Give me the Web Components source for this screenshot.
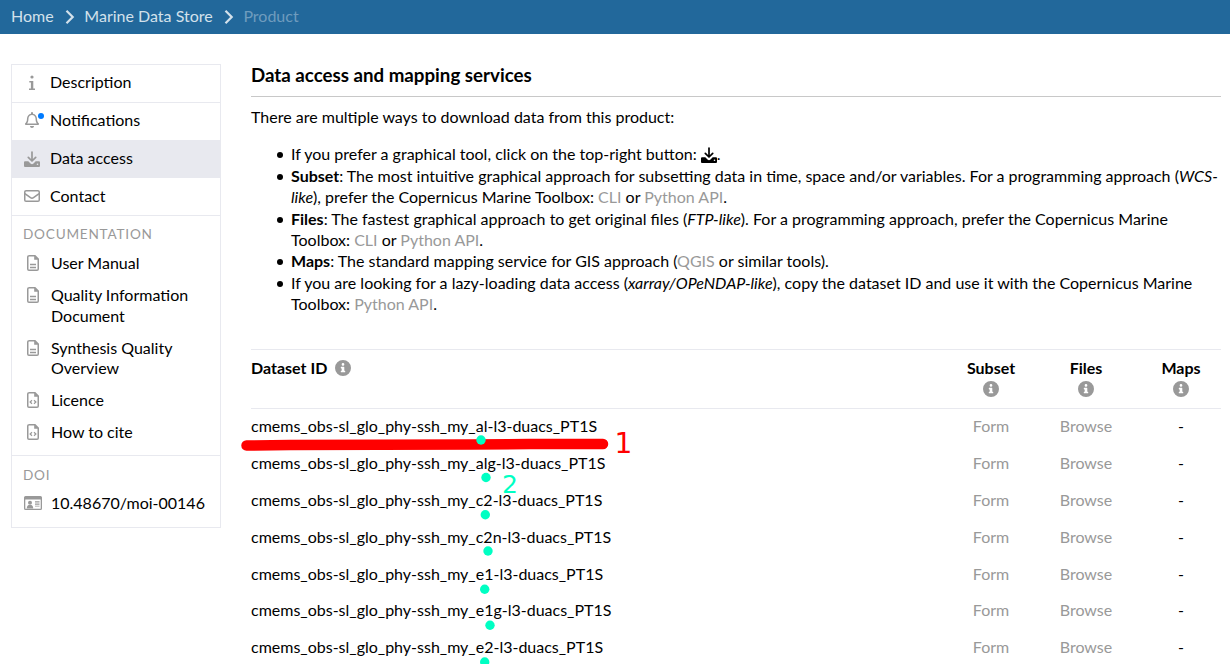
<!DOCTYPE html>
<html lang="en">
<head>
<meta charset="utf-8">
<title>Marine Data Store - Product</title>
<style>
body{margin:0;background:#fff;color:#000;font:16px/20.57px Lato,Carlito,sans-serif;overflow:hidden}
</style>
</head>
<body>
<product-page></product-page>
<script>
const ICONS = {
  info: ['0 0 16 16', '<circle cx="8" cy="2" r="1.600"/><path d="M5.300 6h4v7.500h1.700V15H5v-1.500h1.900v-6H5.300z"/>'],
  bell: ['0 0 448 512', '<path d="M439.400 362.300c-19.300-20.800-55.500-52-55.500-154.300 0-77.700-54.500-139.900-127.900-155.200V32a32 32 0 1 0-64 0v20.800C118.600 68.100 64.100 130.300 64.100 208c0 102.300-36.200 133.500-55.500 154.300C2.600 368.700 0 376.400 0 384c.1 16.400 13 32 32.100 32h383.800c19.100 0 32-15.600 32.100-32 0-7.600-2.600-15.300-8.600-21.700zM67.500 368c21.200-28 44.400-74.300 44.500-159.400 0-.2-.1-.4-.1-.6 0-61.900 50.200-112 112.100-112s112.100 50.100 112.100 112c0 .2-.1.400-.1.600.1 85.100 23.300 131.500 44.500 159.400H67.500zM224 512c35.300 0 64-28.700 64-64H160c0 35.300 28.600 64 64 64z"/>'],
  download: ['0 0 16 16', '<path d="M8 1v8.500M4.300 6.300 8 10l3.700-3.700" fill="none" stroke="currentColor" stroke-width="1.700" stroke-linecap="round" stroke-linejoin="round"/><path fill-rule="evenodd" d="M1.300 10.300h3L6.500 12.400a2.100 2.100 0 0 0 3 0l2.200-2.100h3c.8 0 1.300.5 1.300 1.300v3.100c0 .8-.5 1.300-1.300 1.300H1.300C.5 16 0 15.500 0 14.700v-3.100c0-.8.500-1.300 1.300-1.300zM13.500 12.400a.8.8 0 1 0 0 1.600.8.8 0 0 0 0-1.600z"/>'],
  mail: ['0 0 16 16', '<g fill="none" stroke="currentColor" stroke-width="1.500"><rect x=".75" y="2.750" width="14.500" height="10.500" rx="1.300"/><path d="m.9 5.600 5.600 4.100c1 .7 2 .7 3 0l5.600-4.100"/></g>'],
  file: ['0 0 12 16', '<path d="M1.500.75H8L11.250 4v10c0 .8-.5 1.250-1.250 1.250H2c-.8 0-1.250-.5-1.250-1.250V2C.75 1.200 1.200.75 2 .75zM3 9.500h6M3 12.500h6" fill="none" stroke="currentColor" stroke-width="1.500"/><path d="M7.200.5v4.300h4.300z"/>'],
  code: ['0 0 12 16', '<path d="M1.500.75H8L11.250 4v10c0 .8-.5 1.250-1.250 1.250H2c-.8 0-1.250-.5-1.250-1.250V2C.75 1.200 1.200.75 2 .75z" fill="none" stroke="currentColor" stroke-width="1.500"/><path d="M5 8.200 3.100 10 5 11.800M7 8.200 8.900 10 7 11.800" fill="none" stroke="currentColor" stroke-width="1.200"/><path d="M7.200.5v4.300h4.300z"/>'],
  card: ['0 0 18 14', '<path fill-rule="evenodd" d="M1.500 0h15Q18 0 18 1.500v11q0 1.500-1.500 1.500h-15Q0 14 0 12.500v-11Q0 0 1.500 0zM1.300 3.500v9.200h15.400V3.500z"/><circle cx="6" cy="6.700" r="2"/><path d="M2.800 12.500c0-2.200 1-3.400 2-3.400h2.400c1 0 2 1.200 2 3.400zM11 5.300h4.500v1.200H11zM11 7.500h4.500v1.200H11zM11 9.700h4.500v.7H11z"/>'],
  circle: ['0 0 16 16', '<path fill-rule="evenodd" d="M8 0a8 8 0 1 0 0 16A8 8 0 0 0 8 0zM8 3.100a1.350 1.350 0 1 1 0 2.700 1.350 1.350 0 0 1 0-2.700zM6.200 6.800h2.700q.4 0 .4.400v3.500h.5q.4 0 .4.400v.8q0 .4-.4.400H6.200q-.4 0-.4-.4v-.8q0-.4.400-.4h.5V8.400h-.5q-.4 0-.4-.4v-.8q0-.4.400-.4z"/>'],
  chevron: ['0 0 10 16', '<path d="m1.500 1.800 6.200 6.200-6.200 6.200" fill="none" stroke="currentColor" stroke-width="2.200"/>']
};
function define(name, render) {
  customElements.define(name, class extends HTMLElement {
    connectedCallback() {
      if (this.shadowRoot) return;
      this.attachShadow({mode: 'open'}).innerHTML = render(this);
    }
  });
}
define('ui-icon', el => {
  const [box, art] = ICONS[el.getAttribute('name')];
  return `<style>:host{display:inline-flex;flex:none;width:16px;height:16px}svg{width:100%;height:100%;fill:currentColor}</style><svg viewBox="${box}">${art}</svg>`;
});
define('crumb-bar', () => `<style>
:host{display:flex;align-items:center;height:34px;box-sizing:border-box;padding:0 11px 1px;background:#22689b;color:#d3e1eb}
ui-icon{width:10px;height:16px;margin:1px 10px 0 11px}
ui-icon+span{margin-left:-.3px}
.now{color:#6f9cbe}
</style><span>Home</span><ui-icon name="chevron"></ui-icon><span>Marine Data Store</span><ui-icon name="chevron"></ui-icon><span class="now">Product</span>`);
define('nav-item', el => `<style>
:host{display:flex;align-items:center;box-sizing:border-box;padding:0 0 2px 12px;border-bottom:1px solid #e8e9ef;height:38px}
:host([active]){background:#e8e9ef;height:37px;padding-bottom:1px}
:host(.last){padding-bottom:1px}
.i{position:relative;display:flex;width:16px;justify-content:center;margin-right:10px;color:#999}
.dot{position:absolute;left:14px;top:0;width:6px;height:6px;border-radius:50%;background:#007bff}
:host([unread]) ui-icon{margin-top:-1px;margin-bottom:1px}
</style><span class="i"><ui-icon name="${el.getAttribute('icon')}"></ui-icon>${el.hasAttribute('unread') ? '<span class="dot"></span>' : ''}</span><slot></slot>`);
define('doc-item', el => `<style>
:host{display:flex;align-items:flex-start;margin-bottom:11.430px;padding-left:11px}
ui-icon{width:20px;height:16px;margin:2px 8px 0 0;color:#999}
ui-icon[name=card]{width:18px;height:14px;margin:3px 9px 0 1px}
</style><ui-icon name="${el.getAttribute('icon')}"></ui-icon><span><slot></slot></span>`);
define('side-nav', () => `<style>
:host{display:block;width:208px;height:462px;border:1px solid #e8e9ef}
h2{font-size:13.600px;font-weight:400;letter-spacing:.780px;color:#999;margin:0;padding-left:11px;line-height:20px}
.docs{height:231px;padding-top:8px;border-bottom:1px solid #e8e9ef}
.docs h2{margin-bottom:9px}
.doi{padding-top:9px}
.doi h2{margin-bottom:8px}
</style>
<nav-item icon="info">Description</nav-item><nav-item icon="bell" unread>Notifications</nav-item><nav-item icon="download" active>Data access</nav-item><nav-item icon="mail" class="last">Contact</nav-item>
<div class="docs"><h2>DOCUMENTATION</h2><doc-item icon="file">User Manual</doc-item><doc-item icon="file">Quality Information<br>Document</doc-item><doc-item icon="file">Synthesis Quality<br>Overview</doc-item><doc-item icon="code">Licence</doc-item><doc-item icon="code">How to cite</doc-item></div>
<div class="doi"><h2>DOI</h2><doc-item icon="card">10.48670/moi-00146</doc-item></div>`);
define('access-guide', () => `<style>
:host{display:block}
h1{font-size:18.720px;line-height:23px;margin:0;padding-bottom:9px;border-bottom:1px solid #c8c8c8}
p{margin:10.300px 0 15.250px}
ul{margin:0;padding-left:40px;list-style:none;line-height:21px}
li{margin-bottom:.750px}
li::before{content:"";display:inline-block;width:6px;height:6px;border-radius:50%;background:#000;margin:0 8px 0 -14px;vertical-align:2px}
a{color:#999}
ui-icon{vertical-align:-3px}
</style><h1>Data access and mapping services</h1>
<p>There are multiple ways to download data from this product:</p>
<ul><li>If you prefer a graphical tool, click on the top-right button: <ui-icon name="download"></ui-icon>.</li>
<li><b>Subset</b>: The most intuitive graphical approach for subsetting data in time, space and/or variables. For a programming approach (<i>WCS-<br>like</i>), prefer the Copernicus Marine Toolbox: <a>CLI</a> or <a>Python API</a>.</li>
<li><b>Files</b>: The fastest graphical approach to get original files (<i>FTP-like</i>). For a programming approach, prefer the Copernicus Marine<br>Toolbox: <a>CLI</a> or <a>Python API</a>.</li>
<li><b>Maps</b>: The standard mapping service for GIS approach (<a>QGIS</a> or similar tools).</li>
<li>If you are looking for a lazy-loading data access (<i>xarray/OPeNDAP-like</i>), copy the dataset ID and use it with the Copernicus Marine<br>Toolbox: <a>Python API</a>.</li></ul>`);
define('dataset-row', () => `<style>
:host{display:grid;grid-template-columns:1fr 95px 95px 95px;height:36.800px;align-items:center;text-align:center;margin-right:-7.500px}
.id{text-align:left}a{color:#999}
</style><span class="id"><slot></slot></span><a>Form</a><a>Browse</a><span>-</span>`);
define('dataset-table', () => `<style>
:host{display:block;border-top:1px solid #e8e9ef}
.head{display:grid;grid-template-columns:1fr 95px 95px 95px;height:59px;box-sizing:border-box;padding-top:8px;text-align:center;font-weight:700;border-bottom:1px solid #e8e9ef;margin-bottom:-.800px}
.head>span{display:flex;flex-direction:column;align-items:center}
.head>span:not(.id){margin:0 -7.500px 0 7.500px}
.head>.id{flex-direction:row;align-items:flex-start}
ui-icon{color:#999;margin:2px 1px 0 0}
.id ui-icon{margin:2px 0 0 8px}
</style><div class="head"><span class="id">Dataset ID<ui-icon name="circle"></ui-icon></span><span>Subset<ui-icon name="circle"></ui-icon></span><span>Files<ui-icon name="circle"></ui-icon></span><span>Maps<ui-icon name="circle"></ui-icon></span></div>
${['al','alg','c2','c2n','e1','e1g','e2'].map(s => `<dataset-row>cmems_obs-sl_glo_phy-ssh_my_${s}-l3-duacs_PT1S</dataset-row>`).join('')}`);
define('markup-layer', () => `<style>
:host{position:absolute;inset:0;width:1230px;height:664px;pointer-events:none}
svg{display:block}text{font-family:"DejaVu Sans",sans-serif}
</style><svg width="1230" height="664"><path d="M246.500 445.500 290 445l180-.4 60-.6h73" fill="none" stroke="red" stroke-width="10.500" stroke-linecap="round" stroke-linejoin="round"/>
<g fill="#00ffc3">${[[481,440],[486,477.5],[485.3,514.7],[488,551],[484.7,589.3],[490,625.3],[484.7,662]].map(([x,y]) => `<circle cx="${x}" cy="${y}" r="4.700"/>`).join('')}<text x="502" y="493" font-size="25">2</text></g><text x="614.500" y="453" font-size="28" fill="red">1</text></svg>`);
define('product-page', () => `<style>
:host{display:block;position:relative;height:664px;overflow:hidden}
main{display:grid;grid-template-columns:210px 970px;column-gap:30px;padding:30px 0 0 11px;align-items:start}
access-guide{height:252px}
dataset-table{margin-top:33px}
</style><crumb-bar></crumb-bar><main><side-nav></side-nav><section><access-guide></access-guide><dataset-table></dataset-table></section></main><markup-layer></markup-layer>`);
</script>
</body>
</html>
